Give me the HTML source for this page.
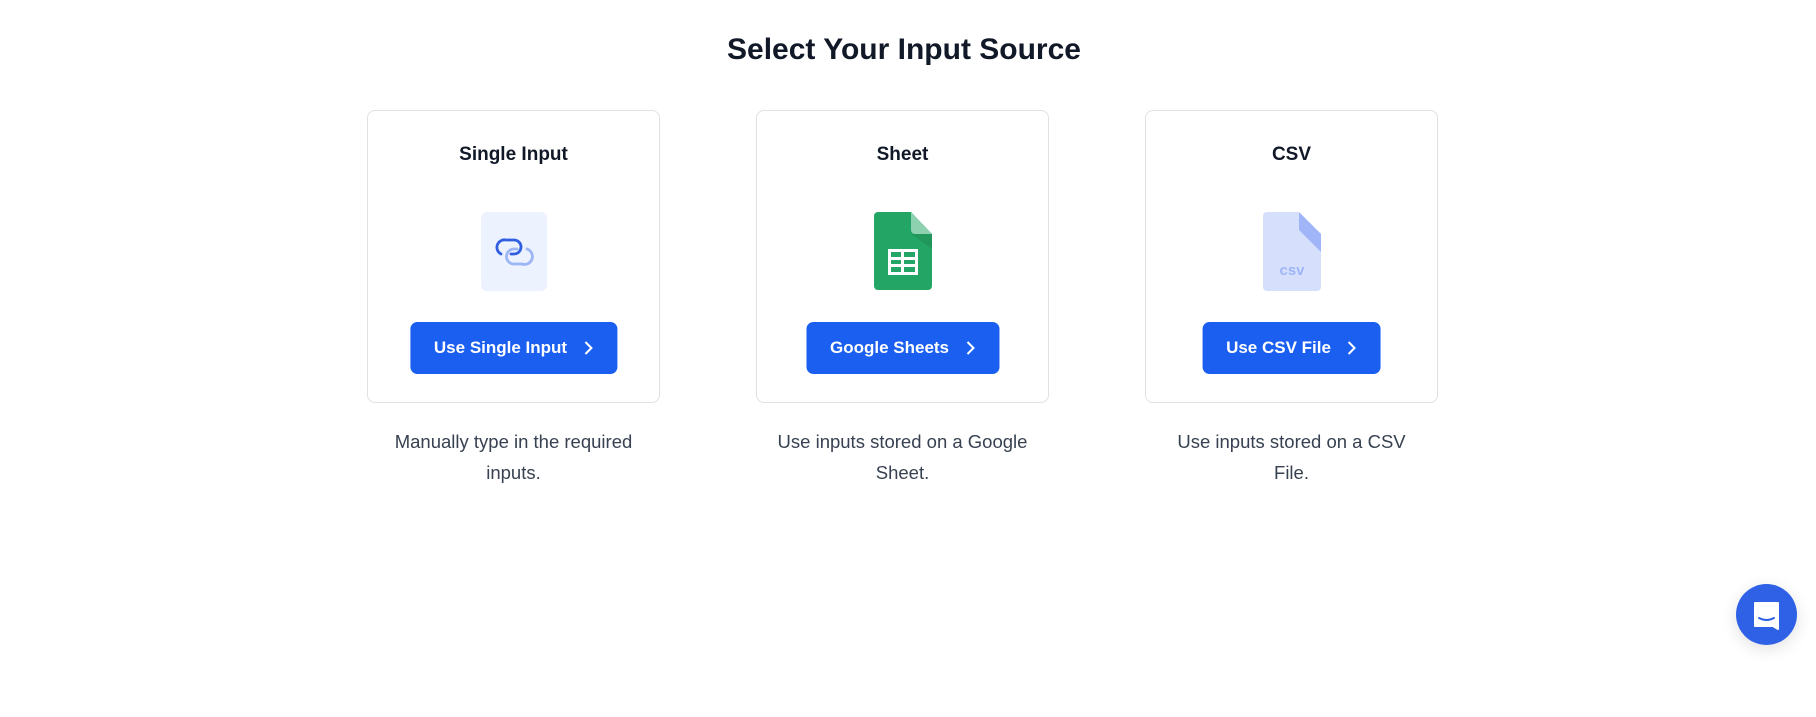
<!DOCTYPE html>
<html><head><style>
body{margin:0;width:1816px;height:717px;background:#fff;font-family:"Liberation Sans",sans-serif;position:relative;overflow:hidden}
h1{position:absolute;top:30px;left:0;width:1808px;text-align:center;margin:0;font-size:30px;font-weight:700;color:#111827;line-height:40px}
.col{position:absolute;top:110px;width:293px}
.card{box-sizing:border-box;height:293px;border:1px solid #dfe1e7;border-radius:8px;position:relative}
.t{position:absolute;top:33px;width:100%;text-align:center;font-size:19px;font-weight:700;color:#111827}
.ic{position:absolute;top:101px;left:50%;transform:translateX(-50%)}
.btn{position:absolute;top:211px;left:50%;transform:translateX(-50%);height:52px;background:#1a5ff0;border-radius:7px;color:#fff;font-weight:700;font-size:17px;display:flex;align-items:center;justify-content:center;white-space:nowrap;padding:0 24px}
.btn svg{margin-left:16px}
.d{margin-top:23px;text-align:center;font-size:18.5px;line-height:31px;color:#374151;padding:0 14px}
.chat{position:absolute;left:1736px;top:584px;width:61px;height:61px;border-radius:50%;background:#2e61e6;box-shadow:0 4px 16px rgba(0,0,0,.12)}
</style></head><body>
<h1>Select Your Input Source</h1>
<div class="col" style="left:367px">
<div class="card"><div class="t">Single Input</div>
<div class="ic" style="width:66px;height:79px;background:#ecf2fe;border-radius:6px">
<svg width="66" height="79" viewBox="0 0 66 79"><path d="M20 42 A7.5 7.5 0 0 1 25 28 H33 A7 7 0 0 1 33 42 H30" fill="none" stroke="#2f5fe0" stroke-width="2.8" stroke-linecap="round"/><path d="M46 37 A7.5 7.5 0 0 1 41 52 H33 A7.5 7.5 0 0 1 33 37 H36" fill="none" stroke="#9db6f6" stroke-width="2.8" stroke-linecap="round"/></svg></div>
<div class="btn">Use Single Input<svg width="10" height="16"><path d="M2 2l6 6-6 6" fill="none" stroke="#fff" stroke-width="2"/></svg></div></div>
<div class="d">Manually type in the required inputs.</div></div>
<div class="col" style="left:756px">
<div class="card"><div class="t">Sheet</div>
<div class="ic"><svg width="58" height="78" viewBox="0 0 58 78"><path d="M4 0H37L58 22V74a4 4 0 0 1-4 4H4a4 4 0 0 1-4-4V4a4 4 0 0 1 4-4z" fill="#23a566"/><path d="M37 0L58 22H41a4 4 0 0 1-4-4z" fill="#8ed1b1"/><path d="M37 22L58 22V37z" fill="#1f8d55" opacity=".6"/><rect x="14" y="37" width="30" height="26" fill="#fff"/><g fill="#23a566"><rect x="17" y="40" width="10" height="5"/><rect x="30" y="40" width="11" height="5"/><rect x="17" y="48" width="10" height="4"/><rect x="30" y="48" width="11" height="4"/><rect x="17" y="55" width="10" height="5"/><rect x="30" y="55" width="11" height="5"/></g></svg></div>
<div class="btn">Google Sheets<svg width="10" height="16"><path d="M2 2l6 6-6 6" fill="none" stroke="#fff" stroke-width="2"/></svg></div></div>
<div class="d">Use inputs stored on a Google Sheet.</div></div>
<div class="col" style="left:1145px">
<div class="card"><div class="t">CSV</div>
<div class="ic"><svg width="58" height="79" viewBox="0 0 58 79"><path d="M4 0H36L58 22V75a4 4 0 0 1-4 4H4a4 4 0 0 1-4-4V4a4 4 0 0 1 4-4z" fill="#d6e0fc"/><path d="M36 0V18L58 40V22z" fill="#9fb5f7"/><text x="29" y="63" text-anchor="middle" font-family="Liberation Sans" font-weight="700" font-size="15" fill="#9fb5f7">csv</text></svg></div>
<div class="btn">Use CSV File<svg width="10" height="16"><path d="M2 2l6 6-6 6" fill="none" stroke="#fff" stroke-width="2"/></svg></div></div>
<div class="d">Use inputs stored on a CSV File.</div></div>
<div class="chat"><svg width="61" height="61" viewBox="0 0 61 61"><path d="M19 19h23v26l-5-3H19z" fill="#fff" stroke="#fff" stroke-linejoin="round" stroke-width="2"/><path d="M23 34q7.5 4 15 0" fill="none" stroke="#2e61e6" stroke-width="2" stroke-linecap="round"/></svg></div>
</body></html>
